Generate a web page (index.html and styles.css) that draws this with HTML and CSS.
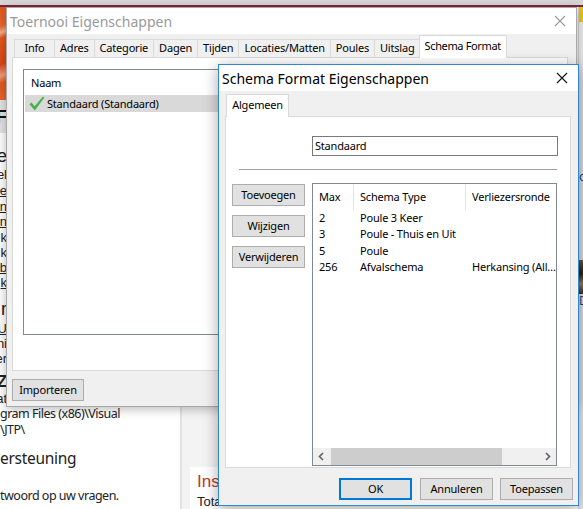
FILE: index.html
```html
<!DOCTYPE html>
<html lang="nl">
<head>
<meta charset="utf-8">
<title>Schema Format Eigenschappen</title>
<link rel="stylesheet" href="styles.css">
</head>
<body>
<div class="desktop">
  <div class="page">
    <div class="page-top"></div>
    <div class="page-body">
      <div class="page-main">
        <div class="banner"></div>
        <div class="band"><div class="sl sl-band">F</div></div>
        <div class="strip">
          <div class="sl sl-h1">e</div>
          <div class="sl sl-a">el</div>
          <div class="sl link">e</div>
          <div class="sl link">n</div>
          <div class="sl link">n</div>
          <div class="sl">k</div>
          <div class="sl">k</div>
          <div class="sl link">b</div>
          <div class="sl link">k</div>
          <div class="sl sl-h2">r</div>
          <div class="sl link">U</div>
          <div class="sl">ni</div>
          <div class="sl">er</div>
          <div class="sl sl-h3">Z</div>
          <div class="sl sl-at">at</div>
        </div>
        <div class="below">
          <div class="bl bl-first">gram Files (x86)\Visual</div>
          <div class="bl">\JTP\</div>
          <div class="bl bl-h">ersteuning</div>
          <div class="bl bl-last">twoord op uw vragen.</div>
        </div>
      </div>
      <div class="page-side">
        <div class="side-card">
          <div class="side-h">Inschrijvingen</div>
          <div class="side-t">Totaal</div>
        </div>
      </div>
      <div class="page-edge">
        <div class="edge-yellow"></div>
        <div class="edge-link">o</div>
        <div class="edge-img"></div>
        <div class="edge-link">D</div>
      </div>
    </div>
  </div>

  <div class="win win-back">
    <div class="titlebar">
      <span class="title title-inactive">Toernooi Eigenschappen</span>
      <svg class="close close-inactive" width="12" height="12" viewBox="0 0 12 12"><path d="M1 1 L11 11 M11 1 L1 11" stroke="currentColor" stroke-width="1.1" fill="none"/></svg>
    </div>
    <div class="win-body">
      <div class="tabs tabs-back">
        <div class="tab">Info</div>
        <div class="tab">Adres</div>
        <div class="tab">Categorie</div>
        <div class="tab">Dagen</div>
        <div class="tab">Tijden</div>
        <div class="tab">Locaties/Matten</div>
        <div class="tab">Poules</div>
        <div class="tab">Uitslag</div>
        <div class="tab tab-active">Schema Format</div>
      </div>
      <div class="tabpanel panel-back">
        <div class="listview">
          <div class="lv-head">Naam</div>
          <div class="lv-row lv-selected">
            <svg class="check" width="16" height="15" viewBox="0 0 16 15"><path d="M0.5 8.2 L2.6 6.4 L5.6 10.2 L14 0.6 L15.4 1.6 L5.8 14.4 Z" fill="#46b34a"/></svg>
            <span>Standaard (Standaard)</span>
          </div>
        </div>
      </div>
      <div class="footer footer-back">
        <div class="btn btn-import">Importeren</div>
      </div>
    </div>
  </div>

  <div class="win win-front">
    <div class="titlebar titlebar-front">
      <span class="title">Schema Format Eigenschappen</span>
      <svg class="close" width="12" height="12" viewBox="0 0 12 12"><path d="M1 1 L11 11 M11 1 L1 11" stroke="currentColor" stroke-width="1.1" fill="none"/></svg>
    </div>
    <div class="win-body win-body-front">
      <div class="tabs tabs-front">
        <div class="tab tab-active tab-first">Algemeen</div>
      </div>
      <div class="tabpanel panel-front">
        <div class="field-row">
          <div class="textbox">Standaard</div>
        </div>
        <div class="separator"></div>
        <div class="content-row">
          <div class="side-buttons">
            <div class="btn">Toevoegen</div>
            <div class="btn">Wijzigen</div>
            <div class="btn">Verwijderen</div>
          </div>
          <div class="listbox">
            <div class="lb-head">
              <div class="col col-max">Max</div>
              <div class="col col-type">Schema Type</div>
              <div class="col col-lose">Verliezersronde</div>
            </div>
            <div class="lb-row"><div class="col col-max">2</div><div class="col col-type">Poule 3 Keer</div><div class="col col-lose"></div></div>
            <div class="lb-row"><div class="col col-max">3</div><div class="col col-type">Poule - Thuis en Uit</div><div class="col col-lose"></div></div>
            <div class="lb-row"><div class="col col-max">5</div><div class="col col-type">Poule</div><div class="col col-lose"></div></div>
            <div class="lb-row"><div class="col col-max">256</div><div class="col col-type">Afvalschema</div><div class="col col-lose">Herkansing (All…</div></div>
            <div class="lb-fill"></div>
            <div class="hscroll">
              <svg class="arrow" width="17" height="17" viewBox="0 0 17 17"><path d="M10 5 L6.5 8.5 L10 12" stroke="#606060" stroke-width="1.6" fill="none"/></svg>
              <div class="track"><div class="thumb"></div></div>
              <svg class="arrow" width="17" height="17" viewBox="0 0 17 17"><path d="M7 5 L10.5 8.5 L7 12" stroke="#606060" stroke-width="1.6" fill="none"/></svg>
            </div>
          </div>
        </div>
      </div>
      <div class="footer footer-front">
        <div class="btn btn-default">OK</div>
        <div class="btn">Annuleren</div>
        <div class="btn">Toepassen</div>
      </div>
    </div>
  </div>
</div>
</body>
</html>
```

FILE: styles.css
```css
* { box-sizing: border-box; }
html, body { margin: 0; padding: 0; }
body {
  width: 583px;
  height: 509px;
  overflow: hidden;
  background: #fff;
  font-family: "Noto Sans", "DejaVu Sans", sans-serif;
  font-size: 11px;
  letter-spacing: -0.2px;
  color: #000;
}
.desktop { position: relative; width: 583px; height: 509px; overflow: hidden; }

/* background page */
.page { display: flex; flex-direction: column; height: 100%; }
.page-top { height: 7px; background: #d6d6d6; border-bottom: 2px solid #80263a; flex: none; }
.page-body { flex: 1; display: flex; min-height: 0; }
.page-main { width: 180px; flex: none; background: #fff; display: flex; flex-direction: column; overflow: hidden; }
.banner {
  height: 93px; width: 8px; flex: none;
  background: linear-gradient(160deg, #e4561c 0%, #e9672c 20%, #f4b08e 27%, #e4571d 33%, #d9461a 60%, #f0a080 72%, #e35a20 80%, #e8652b 100%);
}
.band { height: 33px; width: 8px; background: #e4e4e4; display: flex; align-items: center; flex: none; }
.strip { width: 7px; flex: none; display: flex; flex-direction: column; color: #222; }
.sl { display: flex; justify-content: flex-end; white-space: nowrap; overflow: hidden; height: 15px; line-height: 15px; font-size: 13px; font-family: "Liberation Sans", Arial, sans-serif; letter-spacing: 0; }
.sl-band { font-weight: bold; font-size: 18px; height: 24px; line-height: 24px; color: #111; width: 7px; }
.sl-h1 { font-size: 18px; height: 34px; line-height: 22px; padding-top: 12px; }
.sl-a { height: 16px; line-height: 16px; }
.link { text-decoration: underline; height: 15.5px; }
.sl-h2 { font-size: 18px; height: 30px; line-height: 22px; padding-top: 7px; }
.sl-h3 { font-size: 16px; font-weight: bold; height: 26px; line-height: 20px; padding-top: 6px; }
.sl-at { height: 14px; line-height: 14px; }
.below { margin-top: auto; padding-bottom: 4px; color: #222; }
.bl { white-space: nowrap; font-size: 12.5px; letter-spacing: -0.5px; line-height: 16px; height: 16px; }
.bl-h { font-size: 15.5px; letter-spacing: -0.3px; line-height: 24px; height: 36px; padding-top: 8px; }
.bl-last { margin-top: 12px; height: 20px; line-height: 20px; }
.page-side { flex: 1; background: #f3f3f3; border-left: 2px solid #e2e2e2; display: flex; flex-direction: column; justify-content: flex-end; }
.side-card { background: #fff; margin-left: 8px; padding: 5px 0 0 7px; height: 42px; font-family: "Liberation Sans", Arial, sans-serif; letter-spacing: 0; }
.side-h { color: #c0392b; font-size: 17px; line-height: 20px; height: 20px; white-space: nowrap; }
.side-t { font-size: 13px; line-height: 16px; margin-top: 2px; color: #222; white-space: nowrap; }
.page-edge { width: 5px; flex: none; background: #e8e8e8; display: flex; flex-direction: column; overflow: hidden; border-left: 1px solid #cfcfcf; }
.edge-yellow { height: 15px; background: #e8c416; margin-bottom: 148px; }
.edge-link { font-size: 12px; color: #1a4f8a; line-height: 14px; white-space: nowrap; }
.edge-img { height: 34px; margin-top: 76px; background: linear-gradient(180deg, #6e5a3c, #2a2418 40%, #9a8460 70%, #3b3426); }

/* windows */
.win { position: absolute; display: flex; flex-direction: column; }
.win-back {
  left: 6px; top: 7px; width: 571px; height: 400px;
  border: 1px solid #a9a9a9;
  box-shadow: 0 2px 10px rgba(0,0,0,0.28);
}
.win-front {
  left: 218px; top: 64px; width: 361px; height: 442px;
  border: 1px solid #2f86d3;
  box-shadow: 0 3px 14px rgba(0,0,0,0.35);
}
.titlebar { height: 26px; flex: none; background: #fff; display: flex; align-items: center; padding-left: 3px; padding-right: 10px; }
.title { flex: 1; font-size: 14px; letter-spacing: 0; white-space: nowrap; color: #000; }
.title-inactive { color: #9a9a9a; }
.close { color: #111; flex: none; }
.close-inactive { color: #9a9a9a; }

.win-body { flex: 1; background: #f0f0f0; display: flex; flex-direction: column; min-height: 0; }
.win-back .win-body { padding: 2px 8px 0 5px; }
.win-body-front { padding: 4px 5px 0 6px; }

.tabs { display: flex; height: 21px; flex: none; padding-left: 2px; align-items: flex-end; position: relative; z-index: 1; }
.tab {
  height: 18px; line-height: 16px; padding: 0 5px;
  border: 1px solid #d9d9d9; border-bottom: none; border-right: none;
  background: #f0f0f0; white-space: nowrap; text-align: center;
}
.tab:nth-last-child(2) { border-right: 1px solid #d9d9d9; }
.tab-active {
  height: 23px; line-height: 20px; margin: 0 -2px -1px -2px;
  background: #fff; border: 1px solid #d9d9d9; border-bottom: none;
  padding: 0 5px;
  position: relative;
}
.tabs-back .tab:nth-child(1) { min-width: 40px; }
.tabs-back .tab-active { letter-spacing: -0.35px; }
.tabs-front .tab-active { margin-left: -1px; width: 63px; }
.tabpanel { background: #fff; border: 1px solid #d9d9d9; flex: none; }
.panel-back { height: 314px; padding: 11px 10px; }
.panel-front { height: 352px; padding: 19px 12px 1px 6px; display: flex; flex-direction: column; margin-right: 2px; }

.listview { height: 266px; border: 1px solid #828790; padding: 1px 1px; }
.lv-head { height: 24px; line-height: 24px; padding-left: 6px; }
.lv-row { height: 17px; display: flex; align-items: center; gap: 2px; background: #d9d9d9; padding-left: 4px; }
.check { flex: none; }

.footer { flex: 1; display: flex; }
.footer-back { padding-top: 8px; }
.footer-front { padding: 10px 0 0 0; justify-content: flex-end; gap: 7px; }

.btn {
  width: 73px; height: 22px; line-height: 20px; text-align: center;
  background: #e1e1e1; border: 1px solid #adadad; white-space: nowrap;
}
.btn-import { width: 72px; }
.btn-default { border: 2px solid #0078d7; line-height: 18px; margin-right: 1px; }

.field-row { display: flex; padding-left: 80px; }
.textbox { width: 246px; height: 20px; border: 1px solid #7a7a7a; background: #fff; line-height: 18px; padding-left: 2px; }
.separator { height: 1px; background: #a0a0a0; margin: 13px 1px 0 7px; flex: none; }
.content-row { display: flex; gap: 7px; margin-top: 13px; flex: 1; min-height: 0; }
.side-buttons { display: flex; flex-direction: column; gap: 9px; padding-top: 1px; }
.side-buttons .btn { height: 22px; }
.listbox { width: 245px; border: 1px solid #828790; background: #fff; display: flex; flex-direction: column; }
.lb-head { display: flex; height: 26px; line-height: 26px; flex: none; }
.lb-head .col + .col { border-left: 1px solid #e5e5e5; }
.lb-row { display: flex; height: 16.4px; line-height: 16px; flex: none; }
.col { white-space: nowrap; overflow: hidden; padding-left: 6px; }
.col-max { width: 40px; flex: none; }
.col-type { width: 112px; flex: none; }
.col-lose { flex: 1; }
.lb-row .col-type, .lb-row .col-lose { padding-left: 7px; }
.lb-fill { flex: 1; }
.hscroll { height: 17px; display: flex; background: #f0f0f0; flex: none; }
.arrow { flex: none; }
.track { flex: 1; display: flex; align-items: center; }
.thumb { width: 171px; height: 17px; background: #cdcdcd; margin-left: 1px; }
```
